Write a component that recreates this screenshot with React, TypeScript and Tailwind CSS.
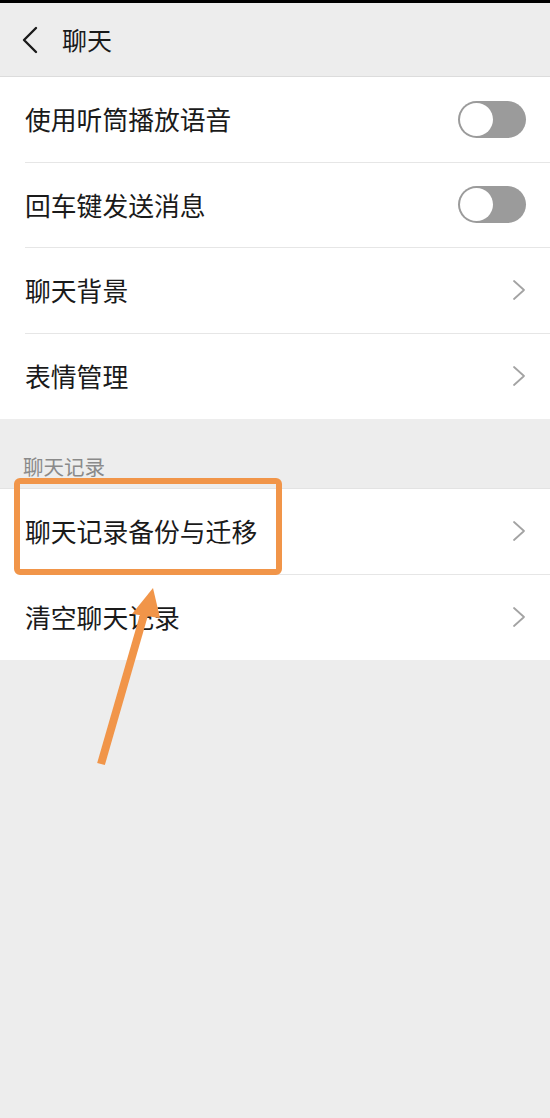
import React from 'react';

const font = { fontFamily: '"Noto Sans CJK SC", "Noto Sans", sans-serif' };

function Toggle() {
  return (
    <div className="w-[68px] h-[37px] rounded-full bg-[#9b9b9b] p-[2px] flex items-center">
      <div className="w-[33px] h-[33px] rounded-full bg-white" />
    </div>
  );
}

function Chevron() {
  return (
    <svg width="14" height="22" viewBox="0 0 14 22" fill="none">
      <path d="M2 2 L12 11 L2 20" stroke="#a3a3a3" strokeWidth="1.8" strokeLinecap="round" strokeLinejoin="round" />
    </svg>
  );
}

function Row({ label, right, last }: { label: string; right: React.ReactNode; last?: boolean }) {
  return (
    <div className="bg-white pl-[25px]">
      <div className={`h-[85.5px] flex items-center justify-between pr-[24px] ${last ? '' : 'border-b border-[#e6e6e6]'}`}>
        <span className="text-[25.8px] text-[#1a1a1a] leading-none">{label}</span>
        {right}
      </div>
    </div>
  );
}

export default function App() {
  return (
    <div className="relative w-[550px] h-[1118px] bg-[#ededed] overflow-hidden" style={font}>
      <div className="h-[3px] bg-black" />
      <div className="h-[74px] flex items-center gap-[22px] pl-[20px] border-b border-[#dcdcdc]">
        <svg width="20" height="28" viewBox="0 0 20 28" fill="none">
          <path d="M16 2 L4 14 L16 26" stroke="#1a1a1a" strokeWidth="2.4" strokeLinecap="round" strokeLinejoin="round" />
        </svg>
        <span className="text-[25px] text-[#1a1a1a] leading-none">聊天</span>
      </div>

      <div>
        <Row label="使用听筒播放语音" right={<Toggle />} />
        <Row label="回车键发送消息" right={<Toggle />} />
        <Row label="聊天背景" right={<Chevron />} />
        <Row label="表情管理" right={<Chevron />} last />
      </div>

      <div className="h-[70px] flex items-end pl-[23px] pb-[12px] border-b border-[#e3e3e3]">
        <span className="text-[20.5px] text-[#8a8a8a] leading-none">聊天记录</span>
      </div>

      <div>
        <Row label="聊天记录备份与迁移" right={<Chevron />} />
        <Row label="清空聊天记录" right={<Chevron />} last />
      </div>

      {/* annotation overlay */}
      <div className="absolute left-[14px] top-[478px] w-[268px] h-[97px] border-[6px] border-[#f19549] rounded-[6px]" />
      <svg className="absolute left-0 top-0" width="550" height="1118" viewBox="0 0 550 1118">
        <line x1="101" y1="764" x2="146" y2="608" stroke="#f19549" strokeWidth="8" />
        <polygon points="153,588 132,614 160,618" fill="#f19549" />
      </svg>
    </div>
  );
}
